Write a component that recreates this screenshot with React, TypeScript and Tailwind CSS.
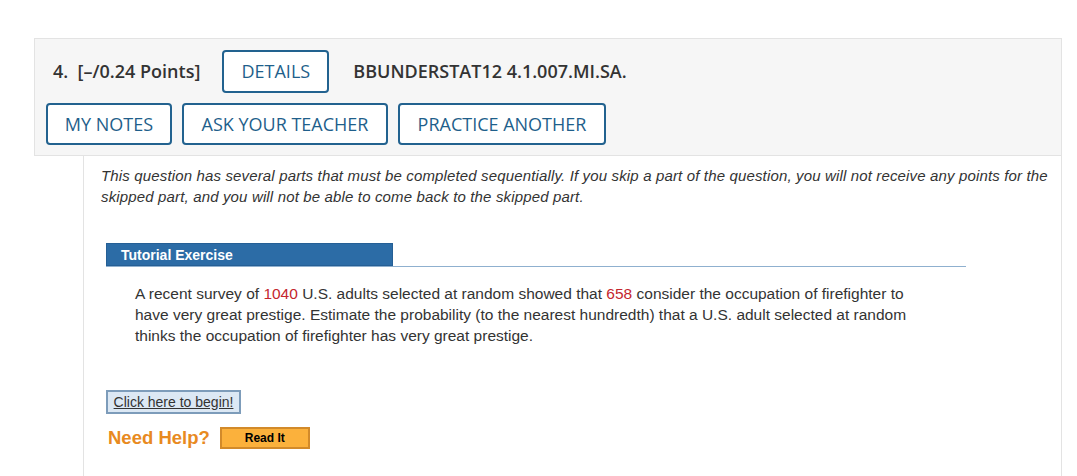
import React from 'react';

const headerFont = { fontFamily: '"Open Sans", "Liberation Sans", sans-serif' };

function OutlineButton({ label, className = '' }: { label: string; className?: string }) {
  return (
    <button
      className={`h-[42px] rounded-[4px] border-2 border-[#22628f] bg-white text-[18px] font-medium text-[#1f5f8b] ${className}`}
    >
      {label}
    </button>
  );
}

export default function App() {
  return (
    <div className="min-h-[476px] bg-white pt-[38px] pl-[34px] pr-[15px]" style={{ fontFamily: '"Liberation Sans", Arial, sans-serif' }}>
      {/* Question header */}
      <div className="w-[1028px] border border-[#e3e3e3] bg-[#f6f6f6] pt-[11px] pb-[10px] pl-[11px]" style={headerFont}>
        <div className="flex items-center pl-[7px]">
          <span className="text-[18px] font-semibold text-[#333]">4.&nbsp; [–/0.24 Points]</span>
          <OutlineButton label="DETAILS" className="ml-[22px] w-[107px] h-[43px]" />
          <span className="ml-[24px] text-[18px] font-semibold text-[#333]">BBUNDERSTAT12 4.1.007.MI.SA.</span>
        </div>
        <div className="mt-[10px] flex gap-[10px]">
          <OutlineButton label="MY NOTES" className="w-[126px]" />
          <OutlineButton label="ASK YOUR TEACHER" className="w-[206px]" />
          <OutlineButton label="PRACTICE ANOTHER" className="w-[208px]" />
        </div>
      </div>

      {/* Question body */}
      <div className="ml-[49px] w-[979px] min-h-[320px] border-x border-[#e3e3e3] bg-white pt-[9px] pl-[17px] pr-[6px]">
        <p className="text-[15px] italic leading-[21px] tracking-[0.15px] text-[#333]">
          This question has several parts that must be completed sequentially. If you skip a part of the question, you will not receive any points for the skipped part, and you will not be able to come back to the skipped part.
        </p>

        <div className="mt-[36px] ml-[5px] w-[860px] border-b border-[#8fb0cf]">
          <div className="h-[23px] w-[287px] border border-[#255f95] bg-[#2c6ca6] pl-[14px] text-[14px] font-bold leading-[22px] text-white">
            Tutorial Exercise
          </div>
        </div>

        <p className="mt-[16px] ml-[34px] w-[785px] text-[15.5px] leading-[21px] text-[#333]">
          A recent survey of <span className="text-[#c4262e]">1040</span> U.S. adults selected at random showed that{' '}
          <span className="text-[#c4262e]">658</span> consider the occupation of firefighter to have very great prestige. Estimate the probability (to the nearest hundredth) that a U.S. adult selected at random thinks the occupation of firefighter has very great prestige.
        </p>

        <button className="mt-[44px] ml-[5px] h-[24px] w-[135px] border-2 border-[#7d9cba] bg-[#dce8f4] text-[14px] leading-[20px] text-[#333] underline">
          Click here to begin!
        </button>

        <div className="mt-[10px] ml-[7px] flex items-center">
          <span className="text-[18.5px] font-bold text-[#e88a1f]">Need Help?</span>
          <button className="ml-[10px] h-[22px] w-[90px] border-2 border-[#d28a2a] bg-[#fbb13c] text-[12px] font-bold leading-[18px] text-black">
            Read It
          </button>
        </div>
      </div>
    </div>
  );
}
